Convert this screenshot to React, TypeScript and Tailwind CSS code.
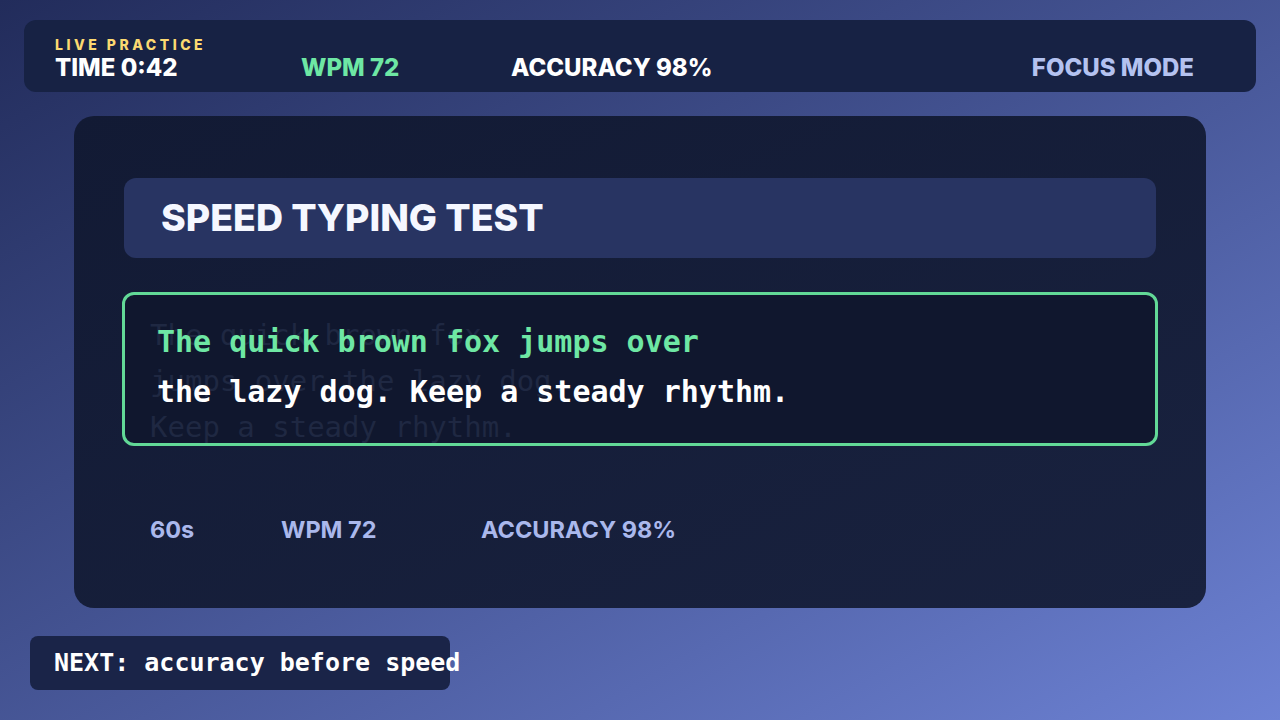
import React from 'react';

const sans = { fontFamily: 'Inter, "Noto Sans", sans-serif' };
const mono = { fontFamily: '"DejaVu Sans Mono", "Liberation Mono", monospace' };

export default function App() {
  return (
    <div
      className="w-[1280px] h-[720px] overflow-hidden bg-gradient-to-br from-[#222c5b] to-[#6d82d4] pt-[20px]"
      style={sans}
    >
      {/* top status bar */}
      <div className="mx-[24px] h-[72px] rounded-[12px] bg-[#172244] flex items-end pb-[10px] pl-[31px] pr-[62px]">
        <div className="w-[246px] flex flex-col">
          <span className="text-[14px] font-extrabold tracking-[0.25em] text-[#fcd971] leading-[18px]">LIVE PRACTICE</span>
          <span className="text-[24px] font-extrabold text-white leading-[28px]">TIME 0:42</span>
        </div>
        <span className="w-[210px] text-[24px] font-extrabold text-[#6ee7a4] leading-[28px]">WPM 72</span>
        <span className="text-[24px] font-extrabold text-white leading-[28px]">ACCURACY 98%</span>
        <span className="ml-auto text-[24px] font-extrabold text-[#b4c2f0] leading-[28px]">FOCUS MODE</span>
      </div>

      {/* main card */}
      <div className="mt-[24px] mx-[74px] h-[492px] rounded-[20px] bg-gradient-to-br from-[#121a34] to-[#19223f] pt-[62px] px-[50px]">
        <div className="h-[80px] rounded-[12px] bg-[#283462] flex items-center pl-[37px]">
          <h1 className="text-[37.5px] font-extrabold text-[#f5f7ff]">SPEED TYPING TEST</h1>
        </div>

        <div className="relative -mx-[2px] mt-[34px] h-[154px] rounded-[12px] border-[3px] border-[#62d997] bg-[#10172e] overflow-hidden">
          <div
            className="absolute left-[25px] top-[17px] text-[29px] leading-[46px] text-[#1f2842] whitespace-pre"
            style={mono}
          >
            {'The quick brown fox\njumps over the lazy dog.\nKeep a steady rhythm.'}
          </div>
          <div className="relative pl-[32px] pt-[22px] text-[30px] font-bold leading-[50px]" style={mono}>
            <div className="text-[#6ee7a4]">The quick brown fox jumps over</div>
            <div className="text-white">the lazy dog. Keep a steady rhythm.</div>
          </div>
        </div>

        <div className="mt-[66px] flex items-center pl-[26px] text-[23.5px] font-bold text-[#aab8ec]">
          <span className="w-[131px]">60s</span>
          <span className="w-[200px]">WPM 72</span>
          <span>ACCURACY 98%</span>
        </div>
      </div>

      {/* next hint */}
      <div className="mt-[28px] ml-[30px] w-[420px] h-[54px] rounded-[8px] bg-[#1a2448] flex items-center pl-[24px]">
        <span className="text-[25px] font-bold text-white whitespace-nowrap" style={mono}>
          NEXT: accuracy before speed
        </span>
      </div>
    </div>
  );
}
